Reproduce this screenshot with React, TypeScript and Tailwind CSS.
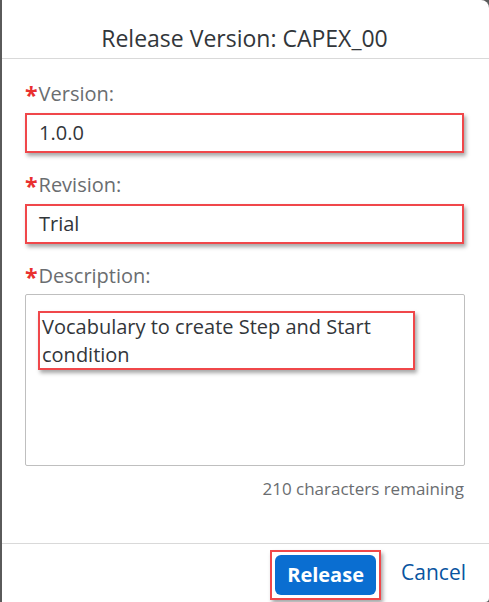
import React from "react";

const font = { fontFamily: '"Open Sans", "Noto Sans", Arial, sans-serif' };

function Label({ text, top }: { text: string; top: string }) {
  return (
    <div className={`flex items-start h-[24px] ${top} text-[20px] leading-[24px] text-[#6a6d70]`}>
      <span className="text-[#e9302f] font-bold text-[23px] leading-[24px] mt-[1px] mr-[1px]">*</span>
      <span>{text}</span>
    </div>
  );
}

export default function App() {
  return (
    <div className="w-[489px] h-[602px] bg-[#5a5a5a] overflow-hidden" style={font}>
      <div className="ml-[2px] h-full bg-white rounded-tr-[8px] rounded-br-[4px] flex flex-col">
        <div className="h-[59px] border-b border-[#d9d9d9] flex items-end justify-center pb-[4px]">
          <span className="text-[23px] leading-[32px] text-[#32363a] -ml-[2px]">Release Version: CAPEX_00</span>
        </div>
        <div className="pl-[23px] pr-[24px]">
          <Label text="Version:" top="mt-[23px]" />
          <div className="mt-[7px] mr-[1px] h-[40px] border-2 border-[#f0474a] shadow-[2px_3px_4px_rgba(0,0,0,0.35)] flex items-center pl-[12px] text-[20px] text-[#32363a]">
            1.0.0
          </div>
          <Label text="Revision:" top="mt-[20px]" />
          <div className="mt-[7px] mr-[1px] h-[40px] border-2 border-[#f0474a] shadow-[2px_3px_4px_rgba(0,0,0,0.35)] flex items-center pl-[12px] text-[20px] text-[#32363a]">
            Trial
          </div>
          <Label text="Description:" top="mt-[20px]" />
          <div className="mt-[6px] h-[172px] border border-[#bfbfbf] rounded-[2px] pt-[16px] pl-[12px]">
            <div className="w-[377px] h-[59px] border-2 border-[#f0474a] shadow-[2px_3px_4px_rgba(0,0,0,0.35)] pl-[2px] text-[20px] leading-[28px] text-[#32363a]">
              Vocabulary to create Step and Start condition
            </div>
          </div>
          <div className="mt-[12px] text-right text-[17px] leading-[22px] text-[#6a6d70] pr-[1px]">
            210 characters remaining
          </div>
        </div>
        <div className="mt-auto h-[59px] border-t border-[#d9d9d9] flex items-center justify-end pr-[23px] gap-[20px]">
          <div className="border-2 border-[#f0474a] p-[3px] shadow-[2px_3px_4px_rgba(0,0,0,0.35)] mt-[4px]">
            <div className="h-[40px] w-[101px] bg-[#0a6ed1] rounded-[6px] flex items-center justify-center text-white font-bold text-[20px]">
              Release
            </div>
          </div>
          <span className="text-[21px] text-[#0854a0]">Cancel</span>
        </div>
      </div>
    </div>
  );
}
